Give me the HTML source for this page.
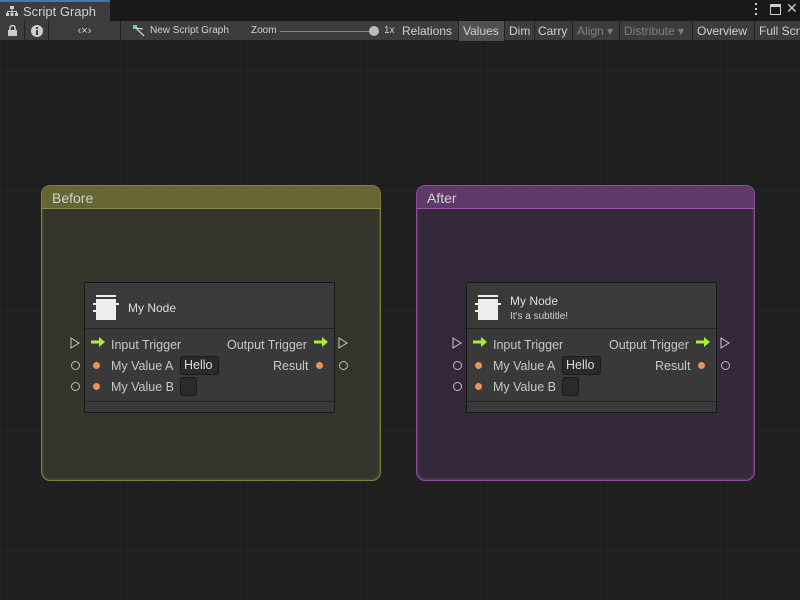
<!DOCTYPE html>
<html><head><style>
*{box-sizing:border-box;margin:0;padding:0}
body{width:800px;height:600px;overflow:hidden;background:#202020;font-family:"Liberation Sans",sans-serif;color:#c8c8c8;position:relative}
.grid{position:absolute;left:0;top:41px;width:800px;height:559px;
background-image:linear-gradient(#191919 1px,transparent 1px),linear-gradient(90deg,#191919 1px,transparent 1px),linear-gradient(#1e1e1e 1px,transparent 1px),linear-gradient(90deg,#1e1e1e 1px,transparent 1px);
background-size:120px 120px,120px 120px,24px 24px,24px 24px;background-position:0 24px,3px 0,0 0,3px 0}
.tabbar{position:absolute;left:0;top:0;width:800px;height:21px;background:#191919}
.tab{position:absolute;left:0;top:0;width:110px;height:21px;background:#3c3c3c;border-top:2px solid #3a79bb;font-size:13px;color:#d2d2d2;padding:2px 0 0 23px}
.toolbar{position:absolute;left:0;top:21px;width:800px;height:20px;background:#3c3c3c;border-bottom:1px solid #232323}
.tb{position:absolute;top:0;height:20px;font-size:12px;line-height:20px;color:#d0d0d0;border-right:1px solid #232323;white-space:nowrap;overflow:hidden}
.dis{color:#808080}
.grp{position:absolute;border-radius:9px;overflow:hidden}
.grp .h{height:23px;font-size:14px;padding:4px 0 0 10px;color:#d0d0d0}
.node{position:absolute;width:251px;height:131px;background:#393939;border:1px solid #181818;border-radius:2px}
.nh{height:46px;border-bottom:1px solid #232323;position:relative;background:#3a3a3a}
.ttl{position:absolute;left:43px;font-size:12px;color:#dedede}
.sub{position:absolute;left:43px;top:28px;font-size:10px;color:#d0d0d0}
.row{position:absolute;font-size:12.5px;color:#c8c8c8;white-space:nowrap}
.dot{position:absolute;width:7px;height:7px;border-radius:50%;background:#f0905a}
.ring{position:absolute;width:9px;height:9px;border-radius:50%;border:1px solid #bdbdbd}
.fld{position:absolute;height:19px;background:#2a2a2a;border:1px solid #1a1a1a;border-radius:3px;font-size:12.5px;color:#dcdcdc;padding:1px 0 0 3px}
.foot{position:absolute;left:0;bottom:0;width:249px;height:11px;border-top:1px solid #232323}
.arr{position:absolute}
.tri{position:absolute}
</style></head><body>
<div class="grid"></div>
<div class="tabbar">
<div class="tab"><svg style="position:absolute;left:6px;top:4px" width="12" height="11" viewBox="0 0 12 11" fill="#ccc"><rect x="4" y="0" width="4" height="3"/><rect x="5.5" y="3" width="1" height="2"/><rect x="1" y="5" width="10" height="1"/><rect x="1" y="5" width="1" height="2"/><rect x="5.5" y="5" width="1" height="2"/><rect x="10" y="5" width="1" height="2"/><rect x="0" y="7" width="3" height="3"/><rect x="4.5" y="7" width="3" height="3"/><rect x="9" y="7" width="3" height="3"/></svg>Script Graph</div>
<div style="position:absolute;left:755px;top:3px;width:2px;height:14px;background:repeating-linear-gradient(#ccc 0 2px,transparent 2px 5px)"></div>
<div style="position:absolute;left:770px;top:4px;width:11px;height:11px;border:1.5px solid #ccc;border-top-width:3px"></div>
<div style="position:absolute;left:786px;top:0px;font-size:14px;color:#ccc">✕</div>
</div>
<div class="toolbar">
<div class="tb" style="left:0;width:25px"><svg style="margin:4px 0 0 8px" width="9" height="11" viewBox="0 0 9 11"><path d="M2 5V3a2.5 2.5 0 0 1 5 0v2" stroke="#ccc" stroke-width="1.5" fill="none"/><rect x="0" y="5" width="9" height="6" fill="#ccc"/></svg></div>
<div class="tb" style="left:25px;width:24px"><svg style="margin:4px 0 0 6px" width="12" height="12"><circle cx="6" cy="6" r="6" fill="#ccc"/><rect x="5" y="5" width="2" height="5" fill="#3c3c3c"/><rect x="5" y="2" width="2" height="2" fill="#3c3c3c"/></svg></div>
<div class="tb" style="left:49px;width:72px;text-align:center;font-size:11px">‹×›</div>
<div class="tb" style="left:121px;width:280px;border:none">
<svg style="position:absolute;left:12px;top:4px" width="12" height="12"><rect x="0" y="0" width="4" height="4" fill="#5ed4c0"/><path d="M3 3L11 11M3 3L10 4" stroke="#ccc" stroke-width="1.3"/></svg>
<span style="position:absolute;left:29px;font-size:10px">New Script Graph</span>
<span style="position:absolute;left:130px;font-size:10px">Zoom</span>
<div style="position:absolute;left:159px;top:10px;width:94px;height:1px;background:#888"></div>
<div style="position:absolute;left:248px;top:5px;width:10px;height:10px;border-radius:50%;background:#bbb"></div>
<span style="position:absolute;left:263px;font-size:10px">1x</span></div>
<div class="tb" style="left:398px;width:61px;padding-left:4px">Relations</div>
<div class="tb" style="left:459px;width:46px;padding-left:4px;background:#505050">Values</div>
<div class="tb" style="left:505px;width:30px;padding-left:4px">Dim</div>
<div class="tb" style="left:535px;width:38px;padding-left:3px">Carry</div>
<div class="tb dis" style="left:573px;width:47px;padding-left:4px">Align ▾</div>
<div class="tb dis" style="left:620px;width:73px;padding-left:4px">Distribute ▾</div>
<div class="tb" style="left:693px;width:62px;padding-left:4px">Overview</div>
<div class="tb" style="left:755px;width:45px;padding-left:4px;border:none">Full Screen</div>
</div>

<div class="grp" style="left:41px;top:185px;width:340px;height:296px;background:#34342a;border:1.5px solid #7f8040;box-shadow:inset 0 0 3px #6a6a38">
<div class="h" style="background:#666634;border-bottom:1px solid #8a8a48">Before</div></div>
<div class="grp" style="left:416px;top:185px;width:339px;height:296px;background:#33283a;border:1.5px solid #8c4c98;box-shadow:inset 0 0 3px #7a4488">
<div class="h" style="background:#5e3a68;border-bottom:1px solid #9a55a8">After</div></div>

<div class="node" style="left:84px;top:282px">
<div class="nh"><svg style="position:absolute;left:7px;top:12px" width="28" height="25"><rect x="4" y="0" width="20" height="2" fill="#eee"/><rect x="4" y="4" width="20" height="21" fill="#eee"/><rect x="1" y="8" width="4" height="2" fill="#eee"/><rect x="1" y="15" width="4" height="2" fill="#eee"/><rect x="23" y="8" width="4" height="2" fill="#eee"/></svg>
<div class="ttl" style="top:18px">My Node</div></div>
<svg class="arr" style="left:6px;top:54px" width="14" height="10"><path d="M0 3.5H8V0L14 5L8 10V6.5H0Z" fill="#a6f03c"/></svg>
<div class="row" style="left:26px;top:55px">Input Trigger</div>
<div class="row" style="left:142px;top:55px">Output Trigger</div>
<svg class="arr" style="left:229px;top:54px" width="14" height="10"><path d="M0 3.5H8V0L14 5L8 10V6.5H0Z" fill="#a6f03c"/></svg>
<div class="dot" style="left:8px;top:79px"></div><div class="row" style="left:26px;top:76px">My Value A</div>
<div class="fld" style="left:95px;top:73px;width:39px">Hello</div>
<div class="row" style="left:188px;top:76px">Result</div><div class="dot" style="left:231px;top:79px"></div>
<div class="dot" style="left:8px;top:100px"></div><div class="row" style="left:26px;top:97px">My Value B</div>
<div class="fld" style="left:95px;top:94px;width:17px"></div>
<div class="foot"></div></div>
<svg class="tri" style="left:70px;top:337px" width="10" height="12"><path d="M1 1L9 6L1 11Z" fill="none" stroke="#c8c8c8"/></svg>
<div class="ring" style="left:71px;top:361px"></div><div class="ring" style="left:71px;top:382px"></div>
<svg class="tri" style="left:338px;top:337px" width="10" height="12"><path d="M1 1L9 6L1 11Z" fill="none" stroke="#c8c8c8"/></svg>
<div class="ring" style="left:339px;top:361px"></div>

<div class="node" style="left:466px;top:282px">
<div class="nh"><svg style="position:absolute;left:7px;top:12px" width="28" height="25"><rect x="4" y="0" width="20" height="2" fill="#eee"/><rect x="4" y="4" width="20" height="21" fill="#eee"/><rect x="1" y="8" width="4" height="2" fill="#eee"/><rect x="1" y="15" width="4" height="2" fill="#eee"/><rect x="23" y="8" width="4" height="2" fill="#eee"/></svg>
<div class="ttl" style="top:11px">My Node</div><div class="sub">It's a subtitle!</div></div>
<svg class="arr" style="left:6px;top:54px" width="14" height="10"><path d="M0 3.5H8V0L14 5L8 10V6.5H0Z" fill="#a6f03c"/></svg>
<div class="row" style="left:26px;top:55px">Input Trigger</div>
<div class="row" style="left:142px;top:55px">Output Trigger</div>
<svg class="arr" style="left:229px;top:54px" width="14" height="10"><path d="M0 3.5H8V0L14 5L8 10V6.5H0Z" fill="#a6f03c"/></svg>
<div class="dot" style="left:8px;top:79px"></div><div class="row" style="left:26px;top:76px">My Value A</div>
<div class="fld" style="left:95px;top:73px;width:39px">Hello</div>
<div class="row" style="left:188px;top:76px">Result</div><div class="dot" style="left:231px;top:79px"></div>
<div class="dot" style="left:8px;top:100px"></div><div class="row" style="left:26px;top:97px">My Value B</div>
<div class="fld" style="left:95px;top:94px;width:17px"></div>
<div class="foot"></div></div>
<svg class="tri" style="left:452px;top:337px" width="10" height="12"><path d="M1 1L9 6L1 11Z" fill="none" stroke="#c8c8c8"/></svg>
<div class="ring" style="left:453px;top:361px"></div><div class="ring" style="left:453px;top:382px"></div>
<svg class="tri" style="left:720px;top:337px" width="10" height="12"><path d="M1 1L9 6L1 11Z" fill="none" stroke="#c8c8c8"/></svg>
<div class="ring" style="left:721px;top:361px"></div>
</body></html>
